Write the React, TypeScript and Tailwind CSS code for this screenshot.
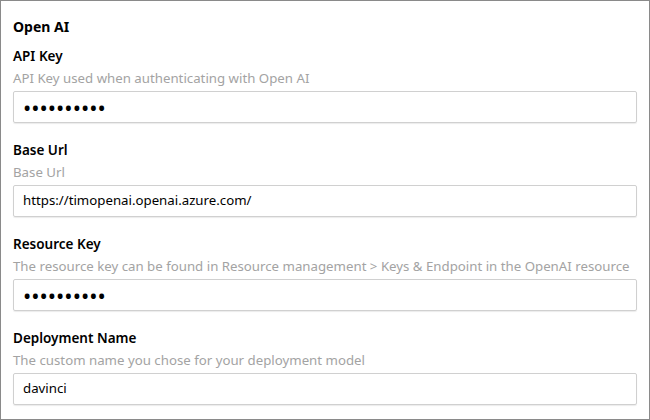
export default function App() {
  const fields = [
    {
      label: "API Key",
      help: "API Key used when authenticating with Open AI",
      value: "••••••••••",
      secret: true,
    },
    {
      label: "Base Url",
      help: "Base Url",
      value: "https://timopenai.openai.azure.com/",
      secret: false,
    },
    {
      label: "Resource Key",
      help: "The resource key can be found in Resource management > Keys & Endpoint in the OpenAI resource",
      value: "••••••••••",
      secret: true,
    },
    {
      label: "Deployment Name",
      help: "The custom name you chose for your deployment model",
      value: "davinci",
      secret: false,
    },
  ];

  return (
    <div className="w-[650px] h-[420px] bg-white border border-[#8a8a8a] font-['Noto_Sans',sans-serif] text-black overflow-hidden">
      <div className="pl-3 pr-3 pt-[16px]">
        <h3 className="text-[14px] font-bold leading-[20px]">Open AI</h3>
        <div className="flex flex-col gap-[16px] mt-[8px]">
          {fields.map((f) => (
            <div key={f.label} className="flex flex-col">
              <label className="text-[13.5px] font-semibold leading-[20px] mt-[1px]">{f.label}</label>
              <span className="text-[13.25px] leading-[20px] text-[#a3a3a3] mt-[2px]">{f.help}</span>
              <div className="mt-[3px] h-[32px] w-[624px] border border-[#d0d0d0] rounded-[2px] shadow-[0_1px_1px_rgba(0,0,0,0.08)] flex items-center px-[9px]">
                {f.secret ? (
                  <span className="text-[22px] leading-none text-black">{f.value}</span>
                ) : (
                  <span className="text-[13.25px] text-black">{f.value}</span>
                )}
              </div>
            </div>
          ))}
        </div>
      </div>
    </div>
  );
}
